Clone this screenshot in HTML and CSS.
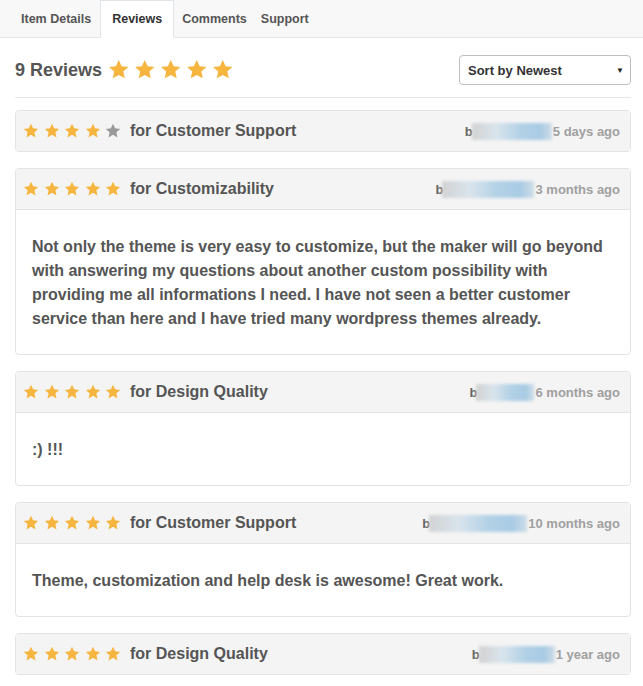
FILE: index.html
```html
<!DOCTYPE html>
<html lang="en">
<head>
    <meta charset="UTF-8">
    <title>Reviews</title>
    <link rel="stylesheet" href="styles.css">
</head>
<body>
    <svg width="0" height="0" class="defs">
        <symbol id="star" viewBox="0 0 24 24">
            <polygon points="12,1.2 15.2,8 22.8,8.9 17.1,14 18.7,21.6 12,17.8 5.3,21.6 6.9,14 1.2,8.9 8.8,8"/>
        </symbol>
    </svg>

    <nav class="tabs">
        <a href="#details" class="tab">Item Details</a>
        <a href="#reviews" class="tab active">Reviews</a>
        <a href="#comments" class="tab">Comments</a>
        <a href="#support" class="tab">Support</a>
    </nav>

    <main class="reviews">
        <div class="summary">
            <h2>9 Reviews</h2>
            <div class="stars big">
                <svg><use href="#star"/></svg><svg><use href="#star"/></svg><svg><use href="#star"/></svg><svg><use href="#star"/></svg><svg><use href="#star"/></svg>
            </div>
            <div class="sort">
                <span>Sort by Newest</span>
                <span class="caret">&#9660;</span>
            </div>
        </div>

        <div class="review">
            <div class="review-head">
                <div class="stars">
                    <svg><use href="#star"/></svg><svg><use href="#star"/></svg><svg><use href="#star"/></svg><svg><use href="#star"/></svg><svg class="off"><use href="#star"/></svg>
                </div>
                <span class="topic">for Customer Support</span>
                <span class="meta"><b>b</b><span class="hidden-name" style="width:80px"></span>5 days ago</span>
            </div>
        </div>

        <div class="review">
            <div class="review-head">
                <div class="stars">
                    <svg><use href="#star"/></svg><svg><use href="#star"/></svg><svg><use href="#star"/></svg><svg><use href="#star"/></svg><svg><use href="#star"/></svg>
                </div>
                <span class="topic">for Customizability</span>
                <span class="meta"><b>b</b><span class="hidden-name" style="width:92px"></span>3 months ago</span>
            </div>
            <p class="review-body">Not only the theme is very easy to customize, but the maker will go beyond with answering my questions about another custom possibility with providing me all informations I need. I have not seen a better customer service than here and I have tried many wordpress themes already.</p>
        </div>

        <div class="review">
            <div class="review-head">
                <div class="stars">
                    <svg><use href="#star"/></svg><svg><use href="#star"/></svg><svg><use href="#star"/></svg><svg><use href="#star"/></svg><svg><use href="#star"/></svg>
                </div>
                <span class="topic">for Design Quality</span>
                <span class="meta"><b>b</b><span class="hidden-name" style="width:58px"></span>6 months ago</span>
            </div>
            <p class="review-body">:) !!!</p>
        </div>

        <div class="review">
            <div class="review-head">
                <div class="stars">
                    <svg><use href="#star"/></svg><svg><use href="#star"/></svg><svg><use href="#star"/></svg><svg><use href="#star"/></svg><svg><use href="#star"/></svg>
                </div>
                <span class="topic">for Customer Support</span>
                <span class="meta"><b>b</b><span class="hidden-name" style="width:98px"></span>10 months ago</span>
            </div>
            <p class="review-body">Theme, customization and help desk is awesome! Great work.</p>
        </div>

        <div class="review">
            <div class="review-head">
                <div class="stars">
                    <svg><use href="#star"/></svg><svg><use href="#star"/></svg><svg><use href="#star"/></svg><svg><use href="#star"/></svg><svg><use href="#star"/></svg>
                </div>
                <span class="topic">for Design Quality</span>
                <span class="meta"><b>b</b><span class="hidden-name" style="width:76px"></span>1 year ago</span>
            </div>
        </div>
    </main>
</body>
</html>
```

FILE: styles.css
```css
body {
    font-family: 'Liberation Sans', Arial, sans-serif;
    font-weight: bold;
    background-color: #fff;
    color: #555;
    margin: 0;
    padding: 0;
}

.defs {
    position: absolute;
}

/* tabs */
.tabs {
    display: flex;
    height: 37px;
    padding-left: 13px;
    background-color: #f8f8f8;
    border-bottom: 1px solid #e3e6e9;
}

.tab {
    display: flex;
    align-items: center;
    padding: 0 8px;
    font-size: 12.5px;
    color: #555;
    text-decoration: none;
}

.tab:last-child {
    padding-left: 6px;
}

.tab.active {
    box-sizing: border-box;
    height: 38px;
    margin: 0 0 -1px 1px;
    padding: 0 11px;
    background-color: #fff;
    color: #333;
    border: 1px solid #dfe4e8;
    border-bottom-color: #fff;
}

/* summary row */
.reviews {
    padding: 0 12px 20px 15px;
}

.summary {
    display: flex;
    align-items: center;
    padding: 17px 0 12px;
    border-bottom: 1px solid #e6e6e6;
    margin-bottom: 12px;
}

.summary h2 {
    margin: 0 6px 0 0;
    font-size: 18px;
    color: #555;
}

.stars {
    display: flex;
    gap: 4.5px;
    fill: #f5b53f;
}

.stars svg {
    width: 16px;
    height: 16px;
}

.stars.big svg {
    width: 21.5px;
    height: 21.5px;
}

.stars .off {
    fill: #9a9a9a;
}

.sort {
    margin-left: auto;
    width: 172px;
    height: 30px;
    box-sizing: border-box;
    border: 1px solid #bdbdbd;
    border-radius: 4px;
    display: flex;
    align-items: center;
    justify-content: space-between;
    padding: 0 6px 0 8px;
    font-size: 13px;
    color: #333;
}

.caret {
    font-size: 8px;
    color: #222;
}

/* review cards */
.review {
    border: 1px solid #e1e4e7;
    border-radius: 4px;
    margin-bottom: 16px;
    overflow: hidden;
}

.review-head {
    display: flex;
    align-items: center;
    height: 40px;
    padding: 0 10px 0 7px;
    background-color: #f4f4f4;
}

.review-head + .review-body {
    border-top: 1px solid #e1e4e7;
}

.topic {
    margin-left: 9px;
    font-size: 16px;
    color: #555;
}

.meta {
    margin-left: auto;
    display: flex;
    align-items: center;
    font-size: 13px;
    color: #a0a0a0;
}

.meta b {
    color: #666;
}

.hidden-name {
    display: inline-block;
    height: 17px;
    margin: 0 1px 0 -1px;
    background: linear-gradient(90deg, #d2d2d2, #d9e4ec 30%, #b3d1e6 60%, #a8cbe4 85%, #cfdde7);
    filter: blur(1.5px);
}

.review-body {
    margin: 0;
    padding: 25px 16px 23px;
    font-size: 16px;
    line-height: 24px;
    color: #555;
}
```
